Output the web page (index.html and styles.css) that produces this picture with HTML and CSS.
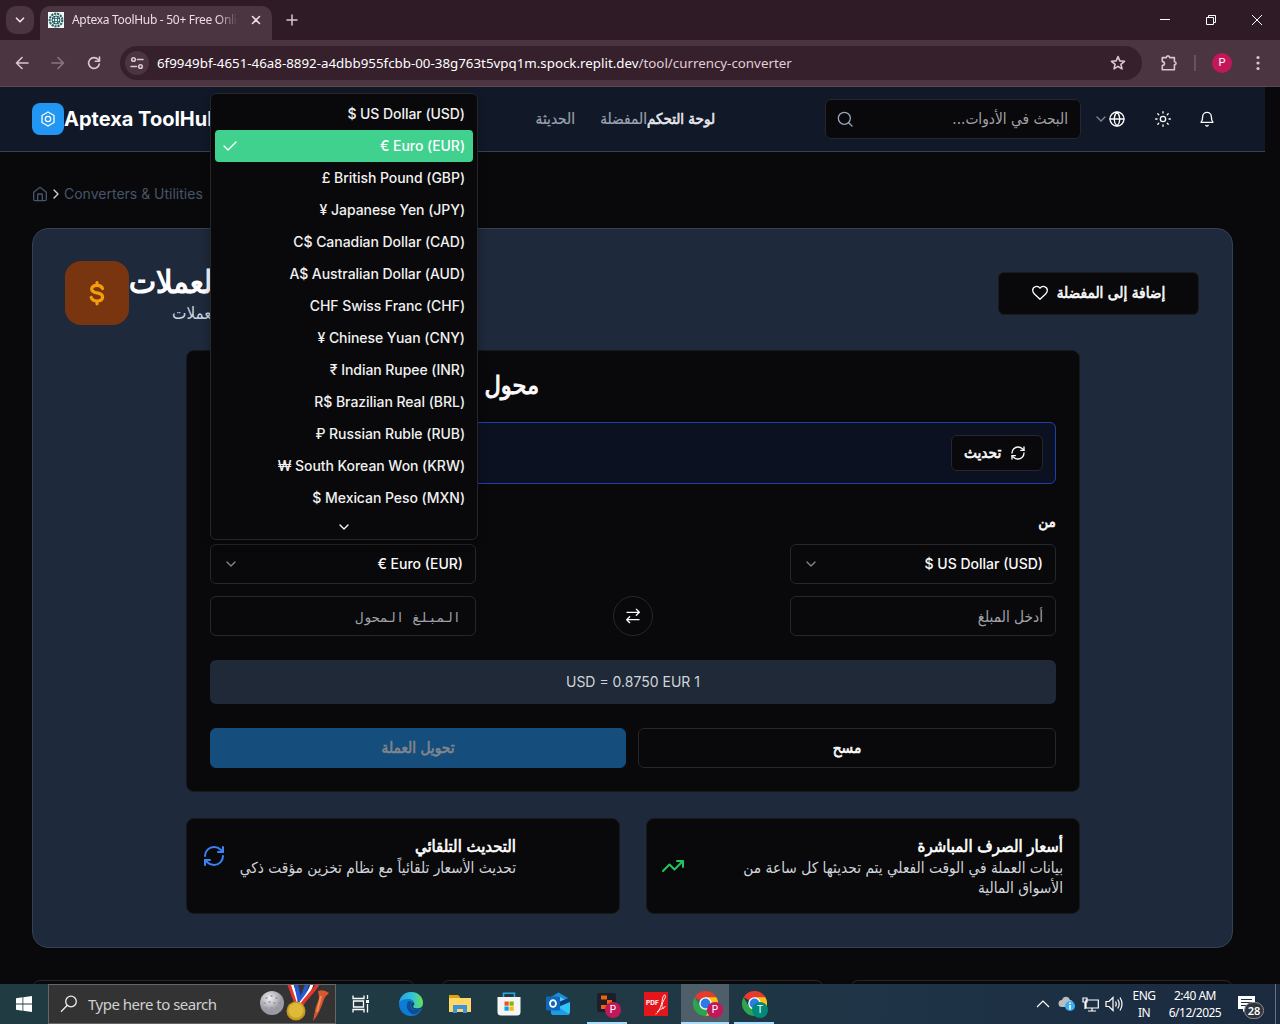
FILE: index.html
```html
<!DOCTYPE html>
<html lang="ar">
<head>
<meta charset="utf-8">
<title>Aptexa ToolHub</title>
<link rel="stylesheet" href="styles.css">
</head>
<body>
<svg class="defs" width="0" height="0">
  <symbol id="chev" viewBox="0 0 24 24"><path d="m6 9 6 6 6-6"/></symbol>
  <symbol id="refresh" viewBox="0 0 24 24"><path d="M3 12a9 9 0 0 1 9-9 9.75 9.75 0 0 1 6.74 2.74L21 8"/><path d="M21 3v5h-5"/><path d="M21 12a9 9 0 0 1-9 9 9.75 9.75 0 0 1-6.74-2.74L3 16"/><path d="M8 16H3v5"/></symbol>
  <symbol id="chrome" viewBox="0 0 24 24"><path fill="#e33b2e" d="M12 12 1.6 6A12 12 0 0 1 22.4 6z"/><path fill="#fbc116" d="M12 12V6h10.4A12 12 0 0 1 12 24l5.2-9z"/><path fill="#2da44e" d="M1.6 6A12 12 0 0 0 12 24l5.2-9L12 12l-5.2 3z"/><circle cx="12" cy="12" r="6" fill="#fff"/><circle cx="12" cy="12" r="4.7" fill="#2a7de9"/></symbol>
</svg>

<div class="tabstrip">
  <div class="tabsearch"><svg class="i" width="14" height="14"><use href="#chev"/></svg></div>
  <div class="tab">
    <svg width="16" height="16" viewBox="0 0 16 16"><path fill="#f2f8f7" d="M0 0h16v16H0z"/><circle cx="8" cy="8" r="6.3" fill="none" stroke="#28686a" stroke-width="2.2" stroke-dasharray="2.2 .8"/><circle cx="8" cy="8" r="4" fill="#dff1ee" stroke="#163f49"/><path d="M4.5 6.5h7M4.5 9.5h7M6.5 4.3v7.4M9.5 4.3v7.4" stroke="#28686a" stroke-width=".9"/></svg>
    <span class="tabtitle">Aptexa ToolHub - 50+ Free Onli</span>
    <svg class="i tabx" width="16" height="16" viewBox="0 0 16 16"><path d="m4.500 4.500 7 7m0-7-7 7"/></svg>
  </div>
  <svg class="i newtab" width="16" height="16" viewBox="0 0 16 16"><path d="M8 3v10M3 8h10"/></svg>
  <div class="winctl">
    <svg width="12" height="12" viewBox="0 0 12 12"><path d="M1 5.500h10"/></svg>
    <svg width="12" height="12" viewBox="0 0 12 12"><path d="M1.500 3.500h7v7h-7zM3.500 3.500v-2h7v7h-2"/></svg>
    <svg width="12" height="12" viewBox="0 0 12 12"><path d="m1 1 10 10m0-10L1 11"/></svg>
  </div>
</div>

<div class="toolbar">
  <svg class="i nav" width="16" height="16" viewBox="0 0 16 16"><path d="M14 8H2.500M8 2.500 2.500 8 8 13.500"/></svg>
  <svg class="i nav dim" width="16" height="16" viewBox="0 0 16 16"><path d="M2 8h11.500M8 2.500 13.500 8 8 13.500"/></svg>
  <svg class="i nav" width="16" height="16" viewBox="0 0 16 16"><path d="M13.300 9A5.400 5.400 0 1 1 12.200 4.600L13.500 6M13.500 2v4.200H9.300"/></svg>
  <div class="omni">
    <div class="site"><svg class="i" width="14" height="14" viewBox="0 0 14 14"><circle cx="3.500" cy="3.500" r="1.800"/><path d="M7.500 3.500H13M1 10.500h5.500"/><circle cx="10.500" cy="10.500" r="1.800"/></svg></div>
    <span class="url"><b>6f9949bf-4651-46a8-8892-a4dbb955fcbb-00-38g763t5vpq1m.spock.replit.dev</b>/tool/currency-converter</span>
    <svg class="i star" width="16" height="16" viewBox="0 0 16 16"><path d="m8 1.600 1.800 4.300 4.700.4-3.600 3 1.100 4.600L8 11.400l-4 2.500 1.100-4.600-3.600-3 4.700-.4z"/></svg>
  </div>
  <svg class="i ext" width="18" height="18" viewBox="0 0 18 18"><path d="M2.300 3.600h4.100c0-2.300 3.200-2.300 3.200 0h4.800v4.100c2.200.2 2.200 3 0 3.200v4.800H2.300v-4.200c2.900-.3 2.900-3.600 0-3.900z"/></svg>
  <div class="vsep"></div>
  <div class="avatar">P</div>
  <svg class="dots" width="4" height="16" viewBox="0 0 4 16"><circle cx="2" cy="2.500" r="1.600"/><circle cx="2" cy="8" r="1.600"/><circle cx="2" cy="13.500" r="1.600"/></svg>
</div>

<div class="page">
  <header>
    <div class="logo"><svg class="i" width="16" height="16" viewBox="0 0 24 24"><path d="M12 1.500 21 6.700v10.600l-9 5.200-9-5.200V6.700z"/><circle cx="12" cy="12" r="4"/></svg></div>
    <div class="brand">Aptexa ToolHub</div>
    <nav>
      <span class="ar n1">الحديثة</span><span class="ar n2">المفضلة</span><span class="ar n3">لوحة التحكم</span>
    </nav>
    <div class="search">
      <svg class="i" width="16" height="16" viewBox="0 0 24 24"><circle cx="11" cy="11" r="9"/><path d="m22.500 22.500-5-5"/></svg>
      <span class="ar">البحث في الأدوات...</span>
    </div>
    <div class="actions">
      <svg class="i lang-chev" width="16" height="16"><use href="#chev"/></svg>
      <svg class="i" width="16" height="16" viewBox="0 0 24 24"><circle cx="12" cy="12" r="10.500"/><path d="M12 1.500a15 15 0 0 0 0 21 15 15 0 0 0 0-21M1.500 12h21"/></svg>
      <svg class="i sun" width="16" height="16" viewBox="0 0 24 24"><circle cx="12" cy="12" r="4"/><path d="M12 1v2m0 18v2M4.200 4.200l1.400 1.400m12.800 12.800 1.400 1.400M1 12h2m18 0h2M5.600 18.400l-1.400 1.400M19.800 4.200l-1.400 1.400"/></svg>
      <svg class="i bell" width="16" height="16" viewBox="0 0 24 24"><path d="M10.300 21.500a2 2 0 0 0 3.400 0M3 17h18c-1.500-2-2.500-3.500-2.500-8.500a6.500 6.500 0 0 0-13 0C5.500 13.500 4.500 15 3 17z"/></svg>
    </div>
  </header>

  <div class="crumbs">
    <svg class="i" width="16" height="16" viewBox="0 0 24 24"><path d="M2.500 9.500 12 2l9.500 7.500V20a2 2 0 0 1-2 2h-15a2 2 0 0 1-2-2z"/><path d="M8.500 22V13a1 1 0 0 1 1-1h5a1 1 0 0 1 1 1v9"/></svg>
    <svg class="i sep" width="16" height="16" viewBox="0 0 24 24"><path d="m9 18 6-6-6-6"/></svg>
    <span>Converters &amp; Utilities</span>
  </div>

  <section class="hero">
    <div class="herohead">
      <div class="tile"><svg class="i" width="32" height="32" viewBox="0 0 32 32"><path d="M21.500 11.500C20.700 9.300 19 8.400 16 8.400c-3.300 0-5.300 1.300-5.300 3.600 0 2.600 2.200 3.300 5.300 3.900s5.600 1.500 5.600 4.200c0 2.400-2.200 3.900-5.600 3.900-3.200 0-5-1.300-5.800-3.500M16 5.500v2.500M16 24.500v2.300"/></svg></div>
      <div class="herotext">
        <div class="ar bold h1">محول العملات</div>
        <div class="ar sub">تحويل بين العملات</div>
      </div>
      <div class="fav"><svg class="i" width="16" height="16" viewBox="0 0 24 24"><path d="M12 21.500 3.300 13C1.800 11.500 1 10 1 8a6 6 0 0 1 11-3.200A6 6 0 0 1 23 8c0 2-.8 3.500-2.300 5z"/></svg><span class="ar bold">إضافة إلى المفضلة</span></div>
    </div>

    <div class="wrap">
      <div class="card conv">
        <div class="ar bold h2">محول العملات</div>
        <div class="status"><div class="btn upd"><span class="ar bold">تحديث</span><svg class="i" width="16" height="16"><use href="#refresh"/></svg></div></div>
        <div class="ar bold label">من</div>
        <div class="grid">
          <div class="field"><svg class="i" width="16" height="16"><use href="#chev"/></svg><span>€ Euro (EUR)</span></div>
          <div></div>
          <div class="field"><svg class="i" width="16" height="16"><use href="#chev"/></svg><span>$ US Dollar (USD)</span></div>
          <div class="field ph"><span class="ar mono">المبلغ المحول</span></div>
          <div class="swap"><svg class="i" width="16" height="16" viewBox="0 0 24 24"><path d="m17 2 4.500 4.500L17 11M3 6.500h18M7 13l-4.500 4.500L7 22M3 17.500h18"/></svg></div>
          <div class="field ph"><span class="ar">أدخل المبلغ</span></div>
        </div>
        <div class="rate">USD = 0.8750 EUR 1</div>
        <div class="btns"><div class="btn go"><span class="ar bold">تحويل العملة</span></div><div class="btn clr"><span class="ar bold">مسح</span></div></div>
      </div>
      <div class="infos">
        <div class="card info">
          <svg class="i blue" width="24" height="24"><use href="#refresh"/></svg>
          <div class="copy"><div class="ar bold t">التحديث التلقائي</div><div class="ar d">تحديث الأسعار تلقائياً مع نظام تخزين مؤقت ذكي</div></div>
        </div>
        <div class="card info two">
          <svg class="i green" width="24" height="24" viewBox="0 0 24 24"><path d="m2 17 6.500-6.500 5 5L22 7M16 7h6v6"/></svg>
          <div class="copy"><div class="ar bold t">أسعار الصرف المباشرة</div><div class="ar d">بيانات العملة في الوقت الفعلي يتم تحديثها كل ساعة من<br>الأسواق المالية</div></div>
        </div>
      </div>
    </div>
  </section>
  <div class="more"><div></div><div></div><div></div></div>

  <div class="menu">
    <div>$ US Dollar (USD)</div>
    <div class="on"><svg class="i" width="16" height="16" viewBox="0 0 24 24"><path d="M21 6 9 18l-6-6"/></svg>€ Euro (EUR)</div>
    <div>£ British Pound (GBP)</div>
    <div>¥ Japanese Yen (JPY)</div>
    <div>C$ Canadian Dollar (CAD)</div>
    <div>A$ Australian Dollar (AUD)</div>
    <div>CHF Swiss Franc (CHF)</div>
    <div>¥ Chinese Yuan (CNY)</div>
    <div>₹ Indian Rupee (INR)</div>
    <div>R$ Brazilian Real (BRL)</div>
    <div>₽ Russian Ruble (RUB)</div>
    <div>₩ South Korean Won (KRW)</div>
    <div>$ Mexican Peso (MXN)</div>
    <svg class="i down" width="16" height="16"><use href="#chev"/></svg>
  </div>
</div>

<div class="taskbar">
  <div class="start"><svg width="16" height="16" viewBox="0 0 16 16"><path fill="#fff" d="M0 2.200 6.500 1.300v6.300H0zM7.300 1.200 16 0v7.600H7.300zM0 8.400h6.500v6.300L0 13.800zM7.300 8.400H16V16l-8.700-1.200z"/></svg></div>
  <div class="tsearch">
    <svg width="18" height="18" viewBox="0 0 18 18" fill="none" stroke="#eee" stroke-width="1.300"><circle cx="11" cy="6.500" r="5.300"/><path d="M7.300 10.300 1 16.700"/></svg>
    <span>Type here to search</span>
    <svg class="medals" width="74" height="38" viewBox="0 0 74 38">
      <defs><radialGradient id="ball" cx=".4" cy=".3"><stop offset="0" stop-color="#f1f1f3"/><stop offset="1" stop-color="#9a9ba3"/></radialGradient></defs>
      <circle cx="14" cy="18" r="12" fill="url(#ball)"/><path d="M8 13h1m4-2h1m4 2h1M6 18h1m4-1h1m4 1h1m4 0h1M8 23h1m4 0h1m4 0h1m-6 4h1" stroke="#9293a0" stroke-width="1.500" stroke-linecap="round"/>
      <path d="m31-1 8 22" stroke="#e6352e" stroke-width="3.500"/><path d="m34-1 7 21" stroke="#fff" stroke-width="2.500"/><path d="m38-1 4 19" stroke="#2458d6" stroke-width="4"/>
      <path d="M49-1C47 8 43 14 40 20" stroke="#2458d6" stroke-width="4" fill="none"/><path d="M54-1C52 8 46 13 42 19" stroke="#fff" stroke-width="3" fill="none"/><path d="M60-1C55 7 49 12 44 19" stroke="#e6352e" stroke-width="3.500" fill="none"/>
      <circle cx="38" cy="26" r="9.500" fill="#c79a1c"/><circle cx="38" cy="25.500" r="7.500" fill="#dfb93a"/>
      <path d="M60 6q6-2 11 2l-4 4c-3 7-5 16-12 24l2-10c1-7 4-10 4-14z" fill="#d9572e"/><path d="m63 11-4 16" stroke="#f08a55" stroke-width="2"/>
    </svg>
  </div>
  <div class="app tv"><svg width="18" height="18" viewBox="0 0 18 18" fill="none" stroke="#fff" stroke-width="1.300"><path d="M1 .5v3h11v-3M1.500 6h10v6h-10zM1 17.500v-3h11v3M15.500 0v4M15.500 9v8.500"/><path d="M14 5h3v3h-3z" fill="#fff" stroke="none"/></svg></div>
  <div class="app edge"><svg width="24" height="24" viewBox="0 0 24 24"><defs><linearGradient id="eg" x1="0" y1=".5" x2="1" y2=".5"><stop offset="0" stop-color="#2a9fe4"/><stop offset=".6" stop-color="#35c6cf"/><stop offset="1" stop-color="#6be04c"/></linearGradient></defs><circle cx="12" cy="12" r="12" fill="#0d7cd6"/><path fill="url(#eg)" d="M.2 10.500C1.500 4 6 0 12 0c7 0 12 5 12 10.500 0 4-3 6-6 6-2.500 0-4-1-4-2 0-.8 1.300-1.300 1.300-3 0-2.500-2.500-4.500-6-4.500C5 7 1.500 8.500.2 10.500z"/><path fill="#0c4f99" d="M9 9.500c-3 5 0 11.500 5.500 13 3.500-.6 6.500-2.700 8.500-5.800-4 2.300-9.500 1.300-11-1.700-1-2-.5-3.500 1-4.500-1-1.300-3-1.500-4-1z"/><path fill="#203a48" d="M13.500 10.800c-1.400 1-1.600 2.600-.8 4.200 1.600 2.800 6.500 3.500 10.500 1.500l.8.500v-3c-1.500 1.800-3.500 2.500-6 2.500s-4-1-4-2 1.300-1.300 1.300-3c0-.5-1-1-1.800-.7z"/></svg></div>
  <div class="app folder"><svg width="22" height="20" viewBox="0 0 22 20"><path d="M0 1h9l2 2v4H0z" fill="#e3a009"/><path d="M0 4h22v14H0z" fill="#ffd768"/><path d="M4 19v-8h14v8h-4v-4H8v4z" fill="#3d94dc"/></svg></div>
  <div class="app"><svg width="24" height="24" viewBox="0 0 24 24"><path d="M6.500 6V1.300h11V6" fill="none" stroke="#2aa7df" stroke-width="1.600"/><path d="M.5 5h23v15a3.500 3.500 0 0 1-3.500 3.500H4A3.500 3.500 0 0 1 .5 20z" fill="#f5f5f5"/><path d="M7.500 9.500h4.200v4.200H7.500z" fill="#f25022"/><path d="M12.500 9.500h4.200v4.200h-4.200z" fill="#7fba00"/><path d="M7.500 14.500h4.200v4.200H7.500z" fill="#00a4ef"/><path d="M12.500 14.500h4.200v4.200h-4.200z" fill="#ffb900"/></svg></div>
  <div class="app"><svg width="24" height="24" viewBox="0 0 24 24"><path d="M4 5.500 12.500.5 22 6v5H4z" fill="#1a8fdd"/><path d="m12 4 9 4.500-7 5z" fill="#59c8f5"/><path d="M14 9.500 22 6l2 2.500V12l-11 7z" fill="#0a3f83"/><path d="M5 18 24 10v9.500q0 3.500-3.500 3.500H8q-3 0-3-3z" fill="#35c5f5"/><path d="m5 19 9-3 9 6q-1 1-2.500 1H8q-3 0-3-3z" fill="#1d9be6"/><rect y="4.500" width="14" height="14" rx="1" fill="#0f67bd"/><ellipse cx="7" cy="11.500" rx="3" ry="3.400" fill="none" stroke="#fff" stroke-width="1.800"/></svg></div>
  <div class="app run"><svg width="20" height="20" viewBox="0 0 20 20"><rect width="19" height="19" rx="2" fill="#1b1f2b"/><path d="M4 2.500h6v4H4zm6 4.500h5v4h-5zm-6 5h6v4H4z" fill="#f26207"/></svg><span class="badge pk">P</span></div>
  <div class="app pdf"><svg width="24" height="24" viewBox="0 0 24 24"><path d="M0 0h24v24H0z" fill="#e5151c"/><path d="M11.500 22c3-.5 6-8 7-15 .5-4 2.500-5 3-3 .4 2-3 5-3.500 9s2 3.500 3.500 1M13 20c2-3 5-3 7-4" stroke="#fff" fill="none" stroke-width=".9"/></svg><span>PDF</span></div>
  <div class="app run active"><svg width="25" height="25"><use href="#chrome"/></svg><span class="badge pk">P</span></div>
  <div class="app run last"><svg width="25" height="25"><use href="#chrome"/></svg><span class="badge tl">T</span></div>
  <div class="tray">
    <svg width="14" height="8" viewBox="0 0 14 8"><path d="m1 7 6-6 6 6"/></svg>
    <svg width="18" height="16" viewBox="0 0 18 16"><path d="M4 11a3.500 3.500 0 0 1 0-7C5-.5 11-.5 12 4c4 0 4 7 0 7z" fill="#b9bcc0" stroke="none"/><circle cx="12" cy="10" r="5" fill="#38b0f2" stroke="none"/><path d="M12 9v4.500M12 6.500V8" stroke-width="1.500"/></svg>
    <svg width="17" height="15" viewBox="0 0 17 15"><path d="M4 3h12.300v8H4zM10 11v3M6 14h8M1 1h4v4H1zM3 5v7"/></svg>
    <svg width="18" height="16" viewBox="0 0 18 16"><path d="M1 5.500h3l4-4v13l-4-4H1zM10.500 5.500q1.500 2.500 0 5M12.700 3.500q3 4.500 0 9M15 1.500q4 6.500 0 13"/></svg>
    <div class="lang">ENG<br>IN</div>
    <div class="clock">2:40 AM<br>6/12/2025</div>
    <div class="note"><svg width="17" height="16" viewBox="0 0 17 16"><path d="M0 0h17v13h-8l-4 3v-3H0z" fill="#fff" stroke="none"/><path d="M3 3.500h11M3 6.500h11M3 9.500h7" stroke="#1d2d42"/></svg><span>28</span></div>
    <div class="peek"></div>
  </div>
</div>
</body>
</html>
```
FILE: styles.css
```css
* { box-sizing: border-box; }
body {
  margin: 0; width: 1280px; height: 1024px; overflow: hidden;
  display: flex; flex-direction: column;
  background: #09090b; color: #fafafa;
  font: 500 14px/20px Inter, "Liberation Sans", sans-serif;
}
svg { flex: none; display: block; }
.defs { position: absolute; }
.i { fill: none; stroke: currentColor; stroke-width: 2; stroke-linecap: round; stroke-linejoin: round; }
.ar { direction: rtl; white-space: nowrap; font-family: "DejaVu Sans Condensed", "DejaVu Sans", sans-serif; font-size: 15.3px; font-weight: 400; }
.bold { -webkit-text-stroke: .6px currentColor; }

/* browser frame */
.tabstrip { height: 40px; flex: none; background: #2e1b26; display: flex; align-items: center; padding-left: 6px; color: #ecdce4; }
.tabsearch { width: 28px; height: 28px; border-radius: 10px; background: #4b3540; display: grid; place-items: center; }
.tabsearch .i { stroke-width: 3; }
.tab { width: 232px; height: 34px; margin: 6px 0 0 6px; padding: 0 8px 6px; border-radius: 10px 10px 0 0; background: #4b3540; display: flex; align-items: center; }
.tabtitle { width: 168px; margin-left: 8px; overflow: hidden; white-space: nowrap; font: 400 12px/20px "Noto Sans", sans-serif; letter-spacing: -.3px; -webkit-mask-image: linear-gradient(90deg, #000 86%, transparent 99%); mask-image: linear-gradient(90deg, #000 86%, transparent 99%); }
.tabx { stroke-width: 1.6; margin-left: 8px; }
.newtab { stroke-width: 1.5; margin-left: 12px; color: #dfc3d0; }
.winctl { margin-left: auto; display: flex; gap: 34px; padding-right: 17px; }
.winctl svg { fill: none; stroke: #fff; stroke-width: 1; }
.toolbar { height: 47px; flex: none; background: #4b3540; border-bottom: 1px solid #5b4750; display: flex; align-items: center; padding-left: 14px; color: #dfc3d0; }
.toolbar .i { stroke-width: 1.6; }
.nav { margin-right: 20px; }
.nav.dim { color: #8d7480; }
.omni { width: 1022px; height: 34px; border-radius: 17px; background: #35202b; display: flex; align-items: center; padding: 0 16px 0 5px; margin-left: -2px; }
.site { width: 24px; height: 24px; border-radius: 12px; background: #4b3540; display: grid; place-items: center; }
.url { flex: 1; margin-left: 8px; font: 400 13.34px/20px "Noto Sans", sans-serif; white-space: nowrap; color: #e4cdd8; }
.url b { font-weight: 400; color: #fff; }
.ext { margin-left: 18px; }
.vsep { width: 2px; height: 16px; background: #69525e; margin: 0 16px; }
.avatar { width: 20px; height: 20px; border-radius: 10px; background: #c2185b; color: #fff; font: 400 11px/20px Roboto, sans-serif; text-align: center; }
.dots { fill: #dfc3d0; margin-left: 24px; }

/* page */
.page { position: relative; height: 897px; flex: none; overflow: hidden; }
header { width: 1265px; height: 65px; background: #111827; border-bottom: 1px solid #374151; display: flex; align-items: center; padding-left: 32px; }
.logo { width: 32px; height: 32px; border-radius: 8px; background: #2196f3; display: grid; place-items: center; }
.brand { width: 160px; font-size: 20px; line-height: 28px; font-weight: 700; white-space: nowrap; color: #fff; }
nav { margin-left: 310px; width: 291px; display: flex; color: #9ca3af; }
nav .ar { -webkit-text-stroke: .2px currentColor; }
.n1 { width: 41px; margin-right: 24px; }
.n2 { width: 48px; }
nav .n3 { color: #e5e7eb; font-size: 15px; -webkit-text-stroke: .6px currentColor; }
.search { width: 256px; height: 40px; border: 1px solid #27272a; border-radius: 6px; background: #09090b; display: flex; align-items: center; justify-content: space-between; padding: 0 12px 0 11px; color: #a1a1aa; }
.search .i { color: #94a3b8; }
.actions { display: flex; align-items: center; margin-left: 12px; }
.lang-chev { color: #7f8591; }
.sun { margin: 0 28px 0 30px; }

.crumbs { display: flex; align-items: center; height: 20px; margin: 32px 0 24px 32px; color: #475569; font-weight: 400; }
.crumbs .sep { color: #cbd5e1; }
.hero { width: 1201px; height: 720px; margin-left: 32px; border: 1px solid #334155; border-radius: 16px; background: #1e293b; padding: 32px; }
.herohead { display: flex; height: 64px; align-items: center; }
.tile { width: 64px; height: 64px; border-radius: 16px; background: #78350f; color: #f59e0b; display: grid; place-items: center; }
.tile .i { stroke-width: 3.2; }
.herotext { width: 300px; }
.h1 { font-size: 32px; line-height: 40px; width: max-content; color: #fff; -webkit-text-stroke-width: 1.2px; }
.sub { width: max-content; margin-left: 43px; font-size: 17px; line-height: 22px; color: #cbd5e1; }
.fav { margin: 0 1px 0 auto; width: 201px; height: 43px; border: 1px solid #1c1c1f; border-radius: 6px; background: #09090b; display: flex; align-items: center; justify-content: center; gap: 9px; }
.wrap { width: 894px; margin: 25px 0 0 121px; }
.card { background: #09090b; border: 1px solid #19191c; border-radius: 8px; }
.conv { height: 442px; padding: 15px 23px; }
.h2 { width: 329px; font-size: 25px; line-height: 40px; -webkit-text-stroke-width: 1px; }
.status { height: 62px; margin-top: 16px; border: 1px solid #1e40af; border-radius: 6px; background: #0c1122; display: flex; justify-content: flex-end; align-items: center; padding-right: 12px; }
.btn { height: 40px; border: 1px solid #27272a; border-radius: 6px; background: #09090b; display: flex; align-items: center; justify-content: center; }
.upd { width: 92px; height: 36px; justify-content: space-between; padding: 0 16px 0 12px; }
.label { margin-top: 28px; height: 20px; }
.grid { display: grid; grid-template-columns: 266px 1fr 266px; gap: 12px 0; margin-top: 12px; }
.field { height: 40px; border: 1px solid #27272a; border-radius: 6px; display: flex; align-items: center; justify-content: space-between; padding: 0 12px; }
.field .i { color: #85858a; }
.field.ph { justify-content: flex-end; color: #a1a1aa; padding-top: 2px; }
.field .mono { font-family: "DejaVu Sans Mono", monospace; font-size: 13.5px; margin-right: 2px; }
.swap { justify-self: center; width: 40px; height: 40px; border: 1px solid #27272a; border-radius: 20px; display: grid; place-items: center; }
.rate { height: 44px; margin-top: 24px; border-radius: 6px; background: #1f2937; line-height: 44px; text-align: center; color: #d1d5db; font-weight: 400; }
.btns { display: flex; gap: 12px; margin-top: 24px; }
.go { width: 416px; background: #154d7c; border-color: #154d7c; color: #80868c; }
.clr { width: 418px; }
.infos { display: flex; gap: 26px; margin-top: 26px; }
.info { width: 434px; height: 96px; padding: 18px 16px; display: flex; }
.info .i { margin-top: 7px; }
.blue { color: #3b82f6; margin-left: -1px; }
.green { color: #22c55e; }
.info.two .green { margin-top: 17px; margin-left: -2px; }
.copy { width: 290px; }
.two .copy { flex: 1; }
.t { font-size: 16.6px; line-height: 20px; color: #fff; }
.d { line-height: 20px; color: #d1d5db; margin-top: 1px; }
.more { display: grid; grid-template-columns: repeat(3, 1fr); gap: 26px; width: 1201px; margin: 32px 0 0 32px; }
.more div { height: 60px; border: 1px solid #27272a; border-radius: 8px; }

/* open select list */
.menu { position: absolute; left: 210px; top: 6px; width: 268px; height: 447px; padding: 4px; border: 1px solid #27272a; border-radius: 6px; background: #09090b; box-shadow: 0 4px 8px rgba(0,0,0,.3); letter-spacing: -.05px; }
.menu div { height: 32px; padding: 0 8px; border-radius: 4px; display: flex; align-items: center; justify-content: flex-end; color: #f1f1f1; }
.menu .on { background: #41d18f; color: #fff; }
.menu .on .i { margin-right: auto; margin-left: -1px; }
.down { margin: 5px auto 0; }

/* taskbar */
.taskbar { height: 40px; flex: none; display: flex; background: linear-gradient(90deg, #213b42 0, #203a44 45%, #1e3346 70%, #1b2a3f 100%); font-family: "Noto Sans", sans-serif; font-weight: 400; }
.start { width: 48px; display: grid; place-items: center; }
.tsearch { width: 288px; border: 1px solid #666; background: #333; display: flex; align-items: center; padding-left: 11px; color: #d0d0d0; font-size: 15px; }
.tsearch span { width: 170px; margin-left: 10px; white-space: nowrap; letter-spacing: -.5px; }
.app { position: relative; width: 49px; display: grid; place-items: center; }
.tv { width: 49px; }
.edge { width: 51px; }
.folder { width: 48px; }
.run { border-bottom: 2px solid #a9dcfa; width: 40px; margin: 0 5px; }
.active { width: 48px; margin: 0 5px 0 0; background: #4f5f69; }
.last { margin: 0; }
.pdf { width: 49px; padding-right: 2px; }
.pdf span { position: absolute; left: 14px; top: 14px; font: 700 6.500px/11px Inter, sans-serif; color: #fff; }
.badge { position: absolute; right: 6px; bottom: 4px; width: 16px; height: 16px; border-radius: 8px; font: 400 10px/16px Roboto, sans-serif; text-align: center; color: #fff; }
.pk { background: #c2185b; }
.tl { background: #00897b; }
.tray { margin-left: auto; width: 244px; display: flex; align-items: center; font-size: 12px; line-height: 17px; text-align: center; color: #fff; }
.tray svg { fill: none; stroke: #fff; stroke-width: 1.2; margin-right: 8px; }
.tray svg + svg { margin-right: 6px; }
.lang { width: 26px; margin-left: 2px; letter-spacing: -.5px; }
.clock { width: 56px; margin-left: 10px; letter-spacing: -.5px; white-space: nowrap; }
.note { position: relative; margin-left: 15px; }
.note span { position: absolute; left: 6px; top: 6px; width: 20px; height: 17px; border: 1px solid #8b9096; border-radius: 9px; background: #30353b; font: 600 11px/15px "Noto Sans", sans-serif; }
.peek { margin: 0 4px 0 auto; width: 1px; height: 40px; background: #66717f; }
```
